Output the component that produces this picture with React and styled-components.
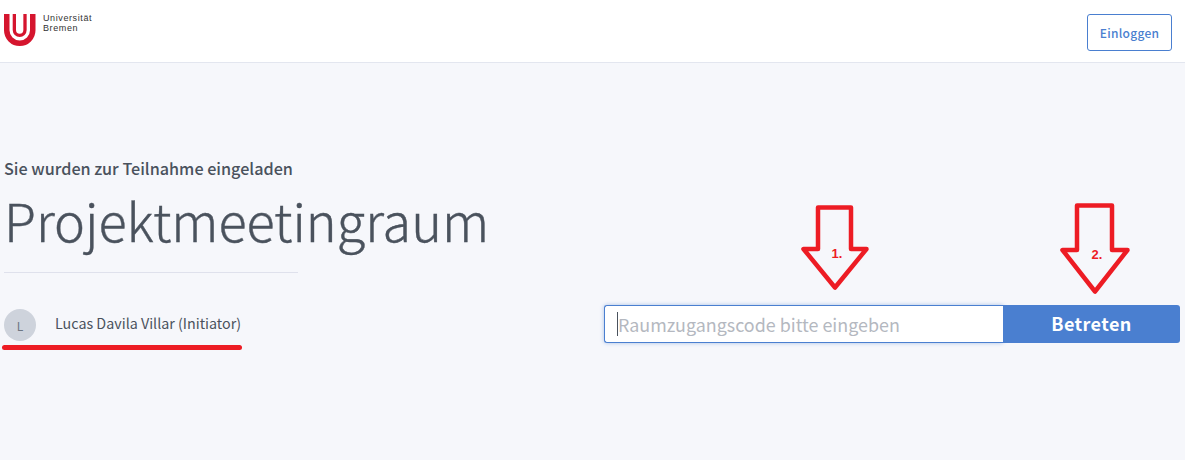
import React from 'react';
import styled, { createGlobalStyle } from 'styled-components';

const FONT = '"Noto Sans CJK SC", "Source Sans Pro", "Noto Sans", sans-serif';

const Global = createGlobalStyle`
  html, body {
    margin: 0;
    padding: 0;
    background: #fff;
  }
  body {
    font-family: ${FONT};
    color: #4a525d;
  }
  * {
    box-sizing: border-box;
  }
`;

const Page = styled.div`
  position: relative;
  width: 1185px;
  height: 460px;
  overflow: hidden;
  background: #f6f7fb;
`;

const Header = styled.header`
  height: 63px;
  background: #fff;
  border-bottom: 1px solid #e3e6ef;
  display: flex;
  align-items: flex-start;
  justify-content: space-between;
  padding: 14px 13px 0 4px;
`;

const Logo = styled.div`
  display: flex;
  gap: 7px;
`;

const LogoText = styled.div`
  font-family: "Liberation Sans", Arial, sans-serif;
  font-size: 9px;
  line-height: 9.5px;
  letter-spacing: 0.6px;
  color: #333;
`;

const LoginButton = styled.button`
  width: 85px;
  height: 37px;
  background: #fff;
  border: 1px solid #4a7fd0;
  border-radius: 3px;
  color: #4a7fd0;
  font-family: ${FONT};
  font-size: 12px;
  font-weight: 500;
  letter-spacing: 0.3px;
  padding: 0;
`;

const Main = styled.main`
  display: flex;
  align-items: flex-start;
  justify-content: space-between;
  padding: 94px 5px 0 4px;
`;

const Intro = styled.section`
  width: 294px;
`;

const Invite = styled.div`
  font-size: 16.2px;
  line-height: 22px;
  font-weight: 500;
`;

const Title = styled.h1`
  margin: 7px 0 0;
  width: 500px;
  font-size: 52.2px;
  line-height: 66px;
  font-weight: 300;
  color: #4a525d;
  -webkit-text-stroke: 0.4px #4a525d;
`;

const Rule = styled.hr`
  margin: 20px 0 0;
  border: 0;
  border-top: 1px solid #dfe1ec;
`;

const Owner = styled.div`
  display: flex;
  align-items: center;
  gap: 19px;
  margin-top: 36px;
  white-space: nowrap;
`;

const Avatar = styled.div`
  width: 32px;
  height: 32px;
  border-radius: 50%;
  background: #ced3dc;
  color: #6d7682;
  font-size: 12px;
  display: flex;
  align-items: center;
  justify-content: center;
`;

const OwnerName = styled.span`
  font-size: 14.3px;
  line-height: 20px;
  color: #4a525d;
  margin-top: -4px;
`;

const JoinForm = styled.form`
  display: flex;
  width: 576px;
  height: 38px;
  margin-top: 148px;
`;

const CodeField = styled.div`
  flex: 1;
  display: flex;
  align-items: center;
  background: #fff;
  border: 1px solid #4a7fd0;
  border-right: 0;
  border-radius: 3px 0 0 3px;
  box-shadow: 0 0 4px rgba(74, 127, 208, 0.45);
  padding-left: 12px;
  font-size: 17.9px;
  color: #b4b8c0;
`;

const Caret = styled.span`
  width: 1px;
  height: 24px;
  background: #4a525d;
`;

const JoinButton = styled.button`
  width: 177px;
  border: 0;
  border-radius: 0 3px 3px 0;
  background: #4a7fd0;
  color: #fff;
  font-family: ${FONT};
  font-size: 18px;
  font-weight: 700;
  letter-spacing: 0.4px;
  padding: 0 0 2px;
`;

const Underline = styled.div`
  position: absolute;
  left: 2px;
  top: 345px;
  width: 240px;
  height: 5px;
  border-radius: 2.5px;
  background: #ed1c24;
`;

const Marker = styled.svg`
  position: absolute;
  left: ${(p) => p.$left}px;
  top: ${(p) => p.$top}px;
`;

function Arrow({ left, top, width, height, stemLeft, stemRight, neck, label }) {
  const mid = width / 2;
  return (
    <Marker $left={left} $top={top} width={width} height={height} viewBox={`0 0 ${width} ${height}`}>
      <polygon
        points={`${stemLeft},2.5 ${stemRight},2.5 ${stemRight},${neck} ${width - 2.5},${neck} ${mid},${height - 3.5} 2.5,${neck} ${stemLeft},${neck}`}
        fill="none"
        stroke="#ed1c24"
        strokeWidth="4.5"
        strokeLinejoin="round"
      />
      <text
        x={mid + 2}
        y={neck + 9}
        textAnchor="middle"
        fontFamily='"Liberation Sans", Arial, sans-serif'
        fontWeight="700"
        fontSize="13"
        fill="#ed1c24"
      >
        {label}
      </text>
    </Marker>
  );
}

export default function App() {
  return (
    <Page>
      <Global />
      <Header>
        <Logo>
          <svg width="32" height="33" viewBox="0 0 32 33">
            <path d="M2.75 0 V16.25 A13 13 0 0 0 28.75 16.25 V0" fill="none" stroke="#d5152e" strokeWidth="5.5" />
            <path d="M10.35 0 V16 A5.3 5.3 0 0 0 21 16 V0" fill="none" stroke="#d5152e" strokeWidth="3.3" />
          </svg>
          <LogoText>
            Universität
            <br />
            Bremen
          </LogoText>
        </Logo>
        <LoginButton type="button">Einloggen</LoginButton>
      </Header>
      <Main>
        <Intro>
          <Invite>Sie wurden zur Teilnahme eingeladen</Invite>
          <Title>Projektmeetingraum</Title>
          <Rule />
          <Owner>
            <Avatar>L</Avatar>
            <OwnerName>Lucas Davila Villar (Initiator)</OwnerName>
          </Owner>
        </Intro>
        <JoinForm onSubmit={(e) => e.preventDefault()}>
          <CodeField>
            <Caret />
            Raumzugangscode bitte eingeben
          </CodeField>
          <JoinButton type="button">Betreten</JoinButton>
        </JoinForm>
      </Main>
      <Underline />
      <Arrow left={801} top={205} width={68} height={86} stemLeft={17} stemRight={50} neck={44} label="1." />
      <Arrow left={1060} top={203} width={70} height={92} stemLeft={17} stemRight={52} neck={47} label="2." />
    </Page>
  );
}
